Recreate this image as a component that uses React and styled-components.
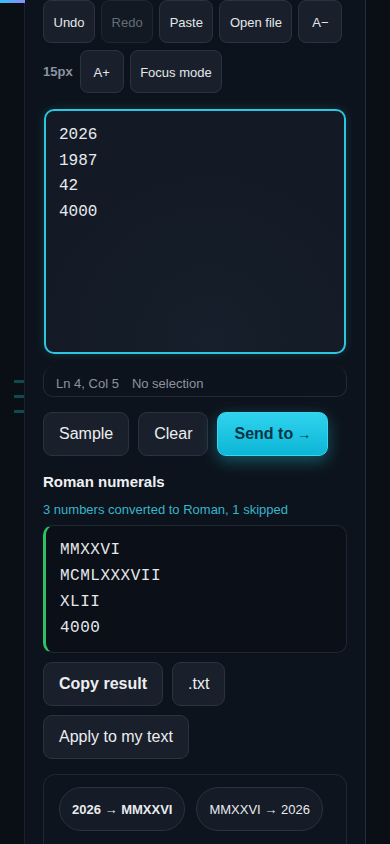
import React from "react";
import styled, { createGlobalStyle } from "styled-components";

const GlobalStyle = createGlobalStyle`
  html, body {
    margin: 0;
    padding: 0;
    background: #0a0e15;
    font-family: "Liberation Sans", Arial, sans-serif;
    color: #e5e7eb;
  }
  * { box-sizing: border-box; }
`;

const Page = styled.div`
  position: relative;
  min-height: 844px;
  overflow: hidden;
`;

const AccentBar = styled.div`
  position: absolute;
  left: 0;
  top: 0;
  width: 25px;
  height: 3px;
  background: linear-gradient(90deg, #38bdf8, #8b8cf6);
`;

const SideTicks = styled.div`
  position: absolute;
  left: 14px;
  top: 380px;
  display: flex;
  flex-direction: column;
  gap: 12px;
`;

const Tick = styled.span`
  display: block;
  width: 10px;
  height: 3px;
  background: #0f4a4f;
`;

const Panel = styled.main`
  margin-left: 24px;
  width: 342px;
  min-height: 844px;
  padding: 1px 18px 40px;
  background: #0d131c;
  border-left: 1px solid #1b222d;
  border-right: 1px solid #252d39;
`;

const Toolbar = styled.div`
  display: flex;
  flex-wrap: wrap;
  align-items: center;
  gap: 7px 6px;
  margin-top: -1px;
`;

const ToolButton = styled.button`
  height: 43px;
  min-width: 44px;
  padding: 2px 9.5px 0;
  border-radius: 8px;
  border: 1px solid ${(p) => (p.disabled ? "#1f2631" : "#2b3340")};
  background: ${(p) => (p.disabled ? "#131922" : "#19202b")};
  color: ${(p) => (p.disabled ? "#646c78" : "#e5e7eb")};
  font-family: "Liberation Sans", Arial, sans-serif;
  font-size: 13px;
`;

const SizeLabel = styled.span`
  font-size: 13px;
  font-weight: 700;
  color: #8a93a1;
  margin-right: 1px;
`;

const Editor = styled.textarea`
  display: block;
  width: 302px;
  height: 245px;
  margin: 16px 1px 0;
  padding: 12px 13px;
  border: 2px solid #2cc6e0;
  border-radius: 10px;
  background: radial-gradient(circle at 55% 95%, #161f2b 0%, #131a25 60%);
  color: #e8eaee;
  font-family: "Liberation Mono", "Courier New", monospace;
  font-size: 16px;
  line-height: 25.6px;
  resize: none;
  outline: none;
  box-shadow: 0 0 10px rgba(34, 211, 238, 0.18);
`;

const StatusBar = styled.div`
  display: flex;
  align-items: center;
  gap: 13px;
  height: 30px;
  margin-top: 13px;
  padding: 3px 12px 0;
  border: 1px solid #222a36;
  border-top: 0;
  border-radius: 10px;
  font-size: 13px;
  color: #8b93a0;
`;

const Row = styled.div`
  display: flex;
  flex-wrap: wrap;
  gap: 9px;
  margin-top: ${(p) => p.$top || 0}px;
`;

const Button = styled.button`
  height: 44px;
  padding: 0 15px;
  border-radius: 9px;
  border: 1px solid #2b3340;
  background: #19202b;
  color: #eceef1;
  font-family: "Liberation Sans", Arial, sans-serif;
  font-size: 16px;
  font-weight: ${(p) => (p.$bold ? 700 : 400)};
`;

const PrimaryButton = styled(Button)`
  padding: 0 16px;
  border: 1px solid #3ad6ef;
  background: linear-gradient(180deg, #2fd3ee 0%, #0db6d6 100%);
  color: #083647;
  font-weight: 700;
  box-shadow: 0 5px 16px rgba(34, 211, 238, 0.35);
`;

const Arrow = styled.span`
  font-weight: 400;
  font-size: 14px;
  margin-left: 4px;
`;

const Heading = styled.h2`
  margin: 17px 0 0;
  font-size: 15px;
  line-height: 18px;
  font-weight: 700;
  color: #eef0f3;
`;

const Summary = styled.p`
  margin: 10px 0 0;
  font-size: 13px;
  line-height: 18px;
  color: #36b5cb;
`;

const Output = styled.pre`
  margin: 6px 0 0;
  height: 128px;
  padding: 11px 14px 12px;
  border: 1px solid #1f2733;
  border-left: 3px solid #2ec061;
  border-radius: 10px;
  background: #0b1018;
  color: #e6e8ec;
  font-family: "Liberation Mono", "Courier New", monospace;
  font-size: 16px;
  line-height: 26px;
  letter-spacing: 0.5px;
`;

const PresetCard = styled.section`
  display: flex;
  flex-wrap: wrap;
  gap: 11px;
  margin-top: 15px;
  padding: 12px 15px 30px;
  border: 1px solid #1f2733;
  border-radius: 12px;
  background: #0e141e;
`;

const Pill = styled.button`
  height: 44px;
  padding: 0 12px;
  border-radius: 22px;
  border: 1px solid #2a323f;
  background: #151c27;
  color: #e8eaee;
  font-family: "Liberation Sans", Arial, sans-serif;
  font-size: 13px;
  font-weight: ${(p) => (p.$bold ? 700 : 400)};
`;

export default function App() {
  return (
    <Page>
      <GlobalStyle />
      <AccentBar />
      <SideTicks>
        <Tick />
        <Tick />
        <Tick />
      </SideTicks>
      <Panel>
        <Toolbar>
          <ToolButton>Undo</ToolButton>
          <ToolButton disabled>Redo</ToolButton>
          <ToolButton>Paste</ToolButton>
          <ToolButton>Open file</ToolButton>
          <ToolButton>A−</ToolButton>
          <SizeLabel>15px</SizeLabel>
          <ToolButton>A+</ToolButton>
          <ToolButton>Focus mode</ToolButton>
        </Toolbar>

        <Editor defaultValue={"2026\n1987\n42\n4000"} spellCheck={false} />
        <StatusBar>
          <span>Ln 4, Col 5</span>
          <span>No selection</span>
        </StatusBar>

        <Row $top={15}>
          <Button>Sample</Button>
          <Button>Clear</Button>
          <PrimaryButton>
            Send to<Arrow>→</Arrow>
          </PrimaryButton>
        </Row>

        <Heading>Roman numerals</Heading>
        <Summary>3 numbers converted to Roman, 1 skipped</Summary>
        <Output>{"MMXXVI\nMCMLXXXVII\nXLII\n4000"}</Output>

        <Row $top={9}>
          <Button $bold>Copy result</Button>
          <Button>.txt</Button>
          <Button>Apply to my text</Button>
        </Row>

        <PresetCard>
          <Pill $bold>2026 → MMXXVI</Pill>
          <Pill>MMXXVI → 2026</Pill>
        </PresetCard>
      </Panel>
    </Page>
  );
}
